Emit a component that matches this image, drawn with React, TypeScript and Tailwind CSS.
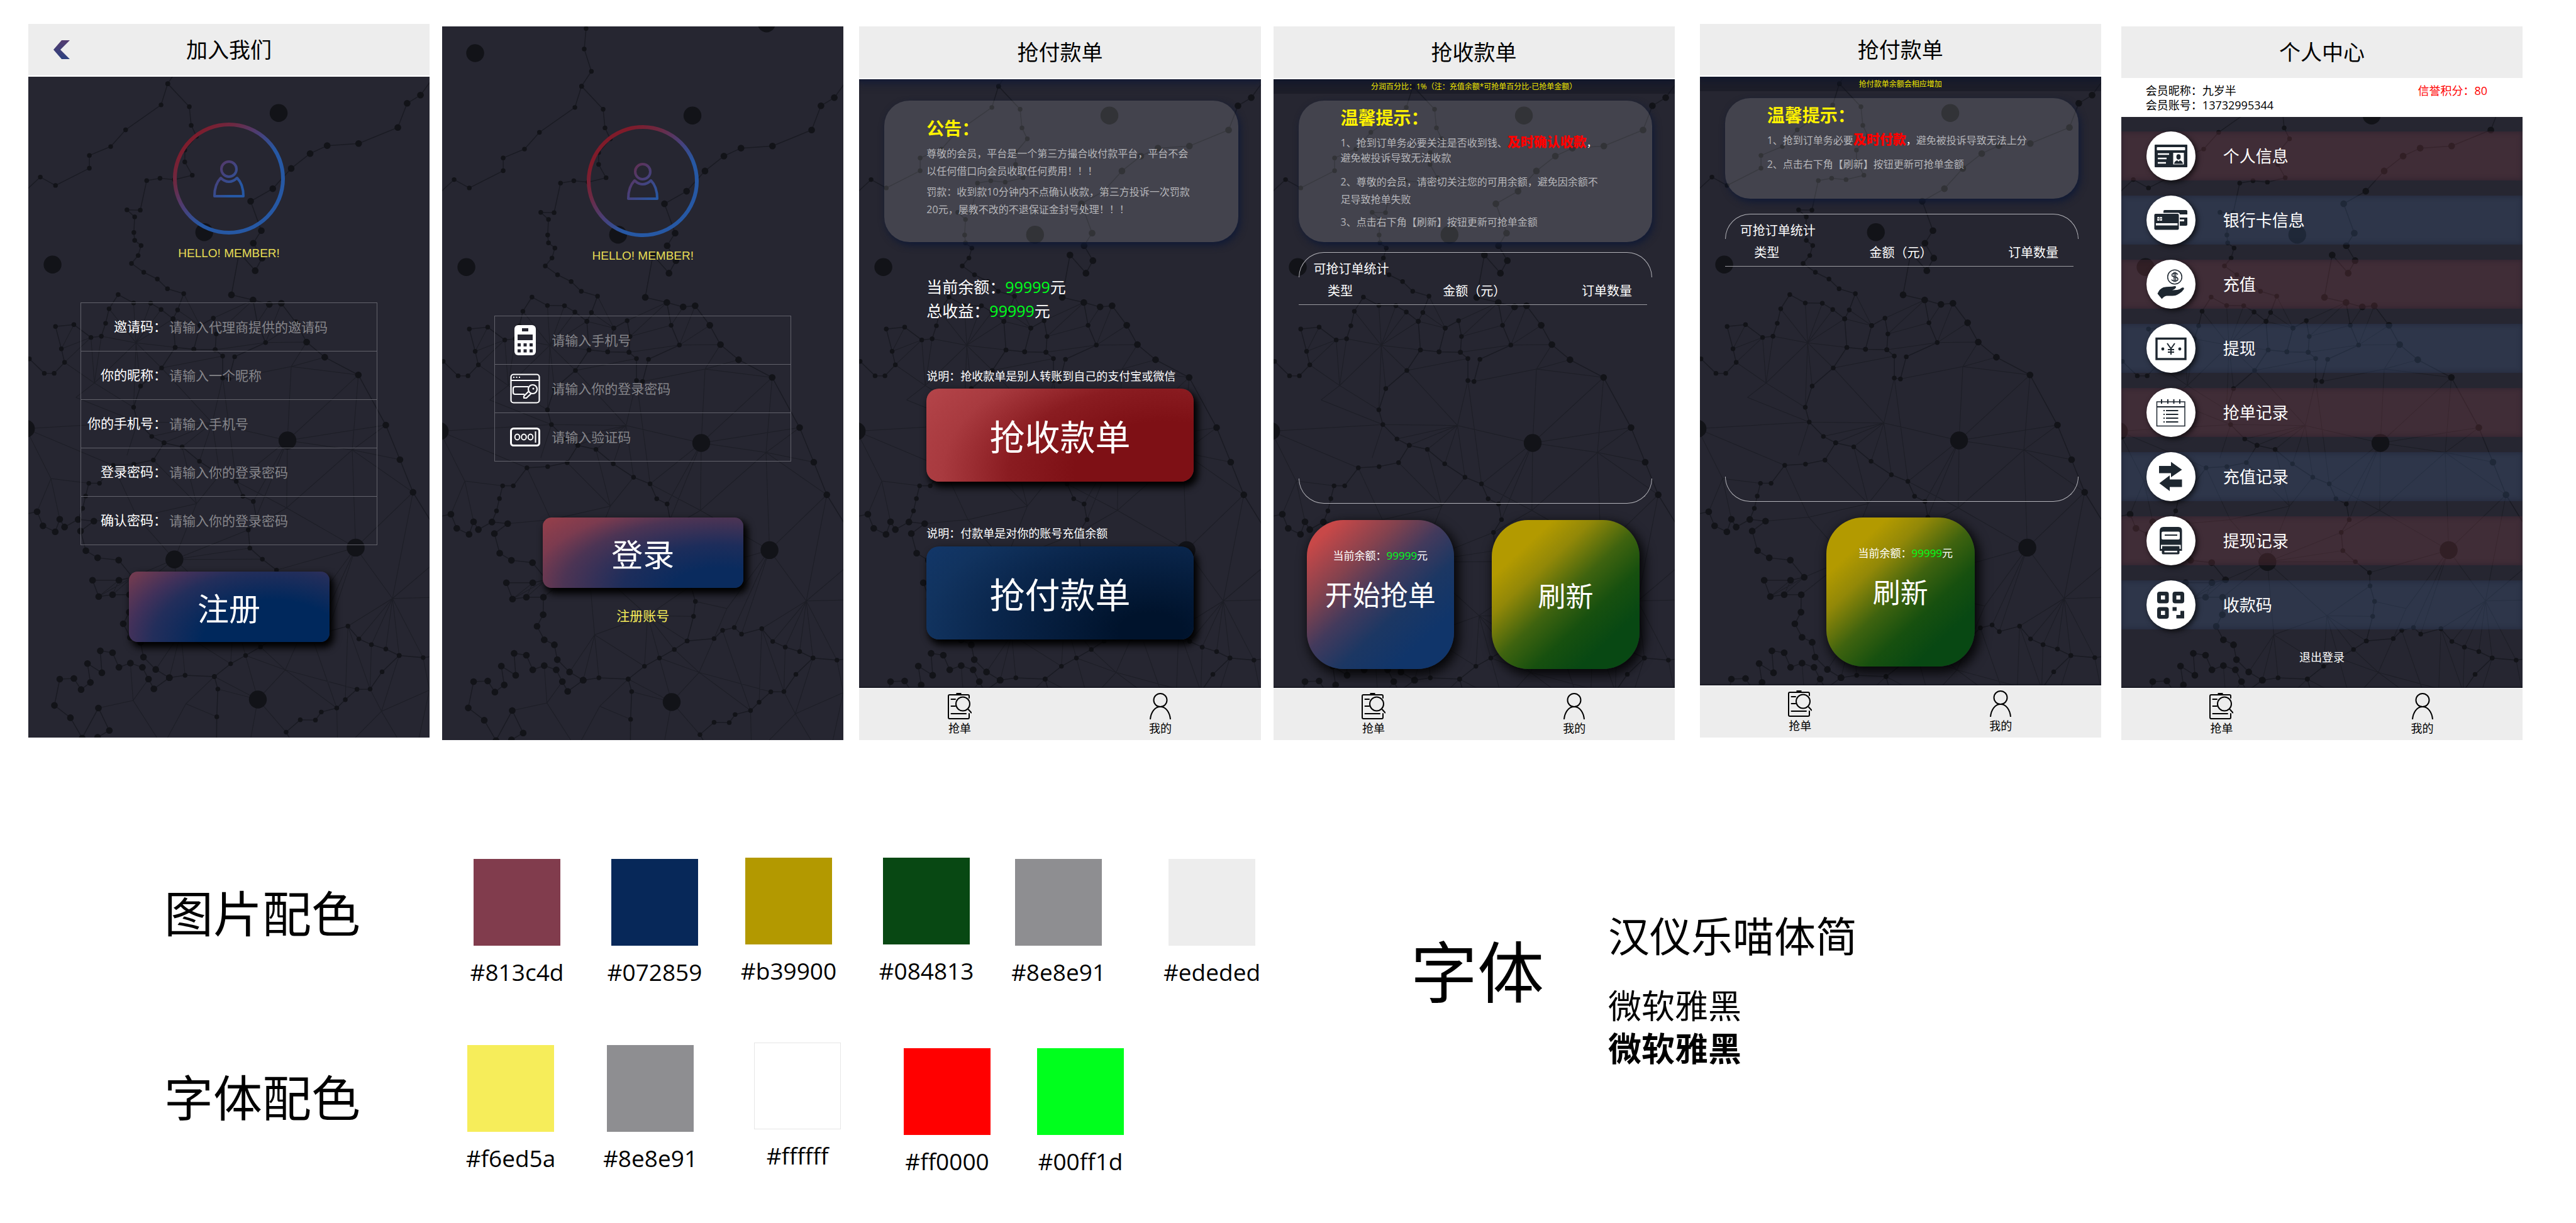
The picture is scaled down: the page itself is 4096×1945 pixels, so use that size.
import React, { useId } from "react";
import type { ReactNode } from "react";

type Point = [number, number];

/* ---------- constellation background ---------- */

// The net is stored as two stacked tiles; these map tile units to screen units.
const up = (x: number, y: number): Point => [(x - 24) * 0.4238, (y - 38) * 0.3701];
const low = (x: number, y: number): Point => [(x - 24) * 0.4238, 557 + y * 0.3761];

const parse = (src: string): Point[] =>
  src
    .trim()
    .split(/\s+/)
    .map((item) => {
      const inUpper = item[0] === "u";
      const [x, y] = (inUpper ? item.slice(1) : item).split(",").map(Number);
      return inUpper ? up(x, y) : low(x, y);
    });

const smallChains = [
  "u564,47 u557,135 u584,231 u547,295 u522,386 u389,493 u333,565 u253,603 u253,658 u126,732 u69,696 u14,754",
  "u547,295 u628,394 u635,474 u655,521 u611,580 u611,631 u639,688 u572,707 u518,701 u468,711 u444,838 u394,837 u423,867 u420,934 u423,968 u447,990 u436,1033 u411,1067 u457,1105 u508,1134 u546,1176 u607,1197 u584,1267 u567,1305 u575,1428 u524,1516 445,50 419,140 434,202 487,263 533,290 601,307 666,368 742,425 804,453 829,516 868,538 879,604 849,658 855,735 902,782 955,828 957,884 974,950 967,1013 943,1117 1044,1107 1076,1072 1120,1060 1147,1088 1223,1065 1264,1119 1311,1143 1365,1162 1415,1189 1505,1198 1545,1192",
  "u567,1305 u522,1265 u483,1238 u419,1237 u361,1201 u327,1262 u314,1324 u298,1380 u259,1385 u195,1330 u126,1338 u148,1434 u160,1492 u121,1539 u84,1539 u28,1477",
  "u668,1334 u718,1302 u729,1370 u725,1438 u645,1436 u668,1334",
  "u575,1428 u645,1436",
  "u725,1438 u753,1465 753,16 776,20 u798,1468 u914,1407 u883,1322 u867,1224",
  "943,1117 895,1153 839,1189 783,1224 722,1278 612,1273 553,1283",
  "211,614 228,567 239,515 251,461 291,461 342,385 420,380 493,363 533,290",
  "722,1278 735,1331 731,1448 730,1560",
  "1415,1189 1351,1258 1306,1331 1257,1332 1213,1376 1181,1411 1123,1428 1101,1462 1044,1461 991,1513 1015,1560",
].map(parse);

const mediumChains = [
  "u1560,242 u1495,344 u1445,379 u1410,483 u1263,552 u1145,561 u1081,595 u1010,659 u941,746 u858,800 u898,926 u868,980 u901,1044 u875,1098 u815,1020 u786,1202 u867,1224 u928,1243 u973,1238 u1028,1322 u1068,1405 u1136,1470 1262,3 1365,215 1418,361 1467,499 1560,670",
  "553,1283 502,1248 456,1196 445,1133 407,1112 380,1055 403,1006 404,932 340,932 288,940 265,871 364,871 415,858 363,786 284,776 240,746 220,663 270,621 211,614 160,646 142,613 125,666 79,641 57,581 10,592",
  "553,1283 495,1330 475,1289 452,1239 407,1221 364,1239 340,1177 294,1169 300,1262 246,1223 257,1303 222,1333 195,1286 142,1289 122,1400 182,1452 226,1538 287,1411 328,1506 284,1535",
].map(parse);

const bigDots = parse(
  "u148,153 u963,421 u684,933 u115,1072 u1241,25 996,280 15,230 1252,733 572,783 885,1375",
);

// Each fan is a hub followed by the points it reaches.
const fans = [
  "u428,1408 u298,1380 u327,1262 u419,1237 u483,1238 u522,1265 u567,1305 u575,1428 u524,1516 419,140 445,50 272,37",
  "272,37 u160,1492 u259,1385 u298,1380 202,98 419,140",
  "202,98 434,202",
  "u668,1334 u607,1197 u584,1267 u567,1305",
  "u867,1224 u718,1302 u729,1370",
  "u883,1322 u729,1370 u928,1243",
  "u914,1407 u725,1438 u973,1238 u1028,1322 u1068,1405",
  "u1010,1510 u1068,1405 u1136,1470 1262,3 776,20 996,280",
  "u148,1434 u195,1330 u259,1385",
  "u160,1492 u259,1385",
  "u524,1516 u753,1465",
  "714,206 434,202 533,290 601,307 666,368 742,425 753,16 996,280 u524,1516 487,263",
  "434,202 394,343",
  "15,230 434,202 342,385 109,441",
  "109,441 251,461 142,613 57,581",
  "655,547 493,363 601,307 742,425 432,604 572,783",
  "432,604 342,385 270,621 572,783",
  "996,280 1262,3 1365,215 1239,320 804,453 868,538 879,604 993,565",
  "993,565 804,453 1239,320 849,658 1252,733",
  "1239,320 1262,3 1365,215 1418,361 1467,499 1252,733",
  "804,453 753,16",
  "1252,733 1467,499 955,828 1092,980 1120,1060 1147,1088 1390,948",
  "1390,948 1467,499 1545,800 1545,943 1223,1065 1264,1119 1311,1143 1365,1162 1415,1189 1505,1198",
  "572,783 849,658 855,735 902,782 795,1010 415,858 404,932 596,1091",
  "795,1010 957,884 967,1013 943,1117 895,1153 839,1189 783,1224 596,1091",
  "596,1091 502,1248 553,1283 612,1273 783,1224",
  "1092,980 974,950 1044,1107",
  "988,1250 839,1189 895,1153 1044,1107 1257,1332 1181,1411 885,1375",
  "1223,1065 1213,1376 1306,1331",
  "1181,1411 1076,1072 1184,1560",
  "1306,1331 1311,1143 1349,1425",
  "885,1375 735,1331 722,1278 839,1189 991,1513 855,1560",
  "615,1393 722,1278 731,1448 535,1560",
  "417,1379 407,1221 475,1289 287,1411 520,1560",
  "1349,1425 1415,1189 1529,1335 1230,1560 1420,1560",
  "1529,1335 1505,1198 1485,1560",
  "364,871 288,940 340,932",
  "415,858 288,940 340,932",
].map(parse);

const polyline = (points: Point[]) =>
  "M" + points.map(([x, y]) => `${x.toFixed(1)} ${y.toFixed(1)}`).join("L");
const spokes = ([hub, ...ends]: Point[]) => ends.map((end) => polyline([hub, end])).join("");

const chainPath = [...smallChains, ...mediumChains].map(polyline).join("");
const fanPath = fans.map(spokes).join("");

function Constellation() {
  return (
    <svg
      aria-hidden="true"
      viewBox="0 0 638 1135"
      preserveAspectRatio="xMidYMin slice"
      className="absolute inset-0 -z-10 h-full w-full"
    >
      <path d={fanPath} fill="none" stroke="#1d1e26" strokeWidth="1" />
      <path d={chainPath} fill="none" stroke="#1a1b23" strokeWidth="1.5" />
      <g fill="#121318">
        {smallChains.flat().map(([x, y], i) => (
          <circle key={i} cx={x} cy={y} r="3.7" />
        ))}
        {mediumChains.flat().map(([x, y], i) => (
          <circle key={i} cx={x} cy={y} r="5.3" />
        ))}
        {bigDots.map(([x, y], i) => (
          <circle key={i} cx={x} cy={y} r="14.2" />
        ))}
      </g>
    </svg>
  );
}

/* ---------- shared screen parts ---------- */

function Screen({ className, children }: { className: string; children: ReactNode }) {
  return (
    <section
      className={`relative isolate flex aspect-[638/1135] min-w-0 flex-1 flex-col overflow-hidden bg-[#262631] text-white ${className}`}
    >
      <Constellation />
      {children}
    </section>
  );
}

function Header({ title, back, glow }: { title: string; back?: boolean; glow?: boolean }) {
  return (
    <header
      className={`grid h-[84px] shrink-0 grid-cols-[1fr_auto_1fr] items-center border-b-2 border-white bg-[#ededed] text-black ${
        glow ? "shadow-[0_2px_12px_4px_#131b36]" : ""
      }`}
    >
      <div className="pl-10">
        {back && (
          <button type="button" aria-label="返回" className="block">
            <svg viewBox="0 0 26 30" className="h-[30px] w-[26px]">
              <defs>
                <linearGradient id="back" x1="0" y1="0" x2="0" y2="1">
                  <stop offset="0" stopColor="#543c70" />
                  <stop offset="1" stopColor="#2c417f" />
                </linearGradient>
              </defs>
              <path d="M0 15L13 0H26L11 15L26 30H13Z" fill="url(#back)" />
            </svg>
          </button>
        )}
      </div>
      <h2 className="text-[34px] leading-[48px]">{title}</h2>
      <div />
    </header>
  );
}

function TabBar() {
  return (
    <nav className="mt-auto flex h-[83px] shrink-0 border-t border-white bg-[#ededed] text-[18px] leading-5 text-black shadow-[0_-1px_2px_#0d0e18]">
      <a href="#orders" className="flex flex-1 flex-col items-center pt-[7px]">
        <svg viewBox="0 0 38 42" className="h-[42px] w-[38px]" fill="none" stroke="#000" strokeWidth="2" strokeLinecap="round">
          <path d="M34 8V5Q34 3 32 3H3Q1 3 1 5V39Q1 41 3 41H32Q34 41 34 39V33" />
          <path d="M13.500 0H21.500V3H13.500Z" fill="#000" stroke="none" />
          <circle cx="24" cy="17.500" r="11" />
          <path d="M33 26.500L37.500 31.500M5.500 10H12M5.500 21H12M5.500 33H29" />
        </svg>
        <span className="mt-1">抢单</span>
      </a>
      <a href="#mine" className="flex flex-1 flex-col items-center pt-[7px]">
        <svg viewBox="0 0 34 42" className="h-[42px] w-[34px]" fill="none" stroke="#000" strokeWidth="2">
          <circle cx="17" cy="11.500" r="10.500" />
          <path d="M1 42C2 31 8 22 17 22S32 31 33 42" />
        </svg>
        <span className="mt-1">我的</span>
      </a>
    </nav>
  );
}

function Avatar({ shift, className }: { shift: number; className: string }) {
  const id = useId();
  return (
    <div className={`flex flex-col items-center ${className}`}>
      <svg viewBox="0 0 178 178" className="h-[178px] w-[178px]" fill="none">
        <defs>
          <linearGradient id={id} gradientUnits="userSpaceOnUse" x1="0" y1="0" x2="178" y2="178">
            <stop offset={0.14 + shift} stopColor="#801b2a" />
            <stop offset={0.28 + shift} stopColor="#6c2942" />
            <stop offset={0.44 + shift} stopColor="#48407a" />
            <stop offset={0.58 + shift} stopColor="#2658a4" />
          </linearGradient>
        </defs>
        <g stroke={`url(#${id})`}>
          <circle cx="89" cy="89" r="86" strokeWidth="6" />
          <circle cx="89" cy="74" r="12" strokeWidth="4" />
          <path
            d="M76 88C69 95 66 105 66 117H112C112 105 109 95 102 88Q96 94 89 94T76 88Z"
            strokeWidth="4"
            strokeLinejoin="round"
          />
        </g>
      </svg>
      <p className="mt-4 font-['Liberation_Sans',sans-serif] text-[19px] leading-7 text-[#e6dd55]">
        HELLO! MEMBER!
      </p>
    </div>
  );
}

const script = "font-['Noto_Sans_CJK_SC',sans-serif] font-normal";

/* ---------- register ---------- */

const registerFields = [
  ["邀请码：", "请输入代理商提供的邀请码", "text"],
  ["你的昵称：", "请输入一个昵称", "text"],
  ["你的手机号：", "请输入手机号", "tel"],
  ["登录密码：", "请输入你的登录密码", "password"],
  ["确认密码：", "请输入你的登录密码", "password"],
];

const inputStyle =
  "h-full w-full min-w-0 flex-1 bg-transparent text-[21px] text-white outline-none placeholder:text-[#85858a]";

function RegisterScreen() {
  return (
    <Screen className="">
      <Header title="加入我们" back />
      <Avatar shift={0} className="mt-[73px]" />
      <form className="mx-[83px] mt-16 border border-b-0 border-[#62626b]">
        {registerFields.map(([label, hint, type], i) => (
          <div key={label} className="flex h-[77px] items-center border-b border-[#62626b]">
            <label htmlFor={`reg-${i}`} className="w-[136px] shrink-0 text-right text-[21px]">
              {label}
            </label>
            <input id={`reg-${i}`} type={type} placeholder={hint} className={`ml-1 ${inputStyle}`} />
          </div>
        ))}
      </form>
      <button
        type="button"
        className={`mx-auto mt-[42px] h-[112px] w-1/2 rounded-[14px] bg-[radial-gradient(320px_190px_at_72%_100%,#00285c_35%,#232e5b_60%,#42315a_72%,#6e3a51_88%,#8f414e_112%)] text-[50px] shadow-[5px_7px_12px_2px_#000] ${script}`}
      >
        注册
      </button>
    </Screen>
  );
}

/* ---------- login ---------- */

function PhoneIcon() {
  return (
    <svg viewBox="0 0 34 48" className="h-12 w-[34px]">
      <rect width="34" height="48" rx="6" fill="#fff" />
      <path
        fill="#262631"
        d="M12 5H22V10H12ZM5 15H29V24H5ZM5 29H10V34H5ZM14.500 29H19.500V34H14.500ZM24 29H29V34H24ZM5 38.500H10V43.500H5ZM14.500 38.500H19.500V43.500H14.500ZM24 38.500H29V43.500H24Z"
      />
    </svg>
  );
}

function KeyIcon() {
  return (
    <svg viewBox="0 0 48 48" className="h-12 w-12" fill="none" stroke="#fff" strokeWidth="2.200">
      <rect x="1.500" y="1.500" width="45" height="45" rx="4" />
      <path d="M2 11H46" />
      <path d="M5 6H7M9.500 6H11.500M14 6H16" />
      <path d="M29 21H8Q5 21 5 24V30Q5 33 8 33H23" />
      <path d="M30 28L22 36V39H26L34 31.500" strokeLinejoin="round" />
      <circle cx="36" cy="25" r="7" />
      <circle cx="37" cy="24" r="1.500" fill="#fff" stroke="none" />
    </svg>
  );
}

function CodeIcon() {
  return (
    <svg viewBox="0 0 48 30" className="h-[30px] w-12" fill="none" stroke="#fff">
      <rect x="1.500" y="1.500" width="45" height="27" rx="4" strokeWidth="3" />
      <g strokeWidth="2">
        <ellipse cx="11.500" cy="15" rx="3.800" ry="4.500" />
        <ellipse cx="22" cy="15" rx="3.800" ry="4.500" />
        <ellipse cx="32.500" cy="15" rx="3.800" ry="4.500" />
        <path d="M40.500 6V24" />
      </g>
    </svg>
  );
}

const loginFields: [string, string, ReactNode][] = [
  ["请输入手机号", "tel", <PhoneIcon />],
  ["请输入你的登录密码", "password", <KeyIcon />],
  ["请输入验证码", "text", <CodeIcon />],
];

function LoginScreen() {
  return (
    <Screen className="mt-1 ml-5">
      <Avatar shift={0.06} className="mt-[157px]" />
      <form className="mx-[83px] mt-[81px] border border-b-0 border-[#62626b]">
        {loginFields.map(([hint, type, icon], i) => (
          <div key={hint} className="flex h-[77px] items-center border-b border-[#62626b]">
            <label htmlFor={`login-${i}`} aria-label={hint} className="ml-6 flex w-12 shrink-0 justify-center">
              {icon}
            </label>
            <input id={`login-${i}`} type={type} placeholder={hint} className={`ml-[18px] ${inputStyle}`} />
          </div>
        ))}
      </form>
      <button
        type="button"
        className={`mx-auto mt-[89px] h-[112px] w-1/2 rounded-[14px] bg-[radial-gradient(400px_180px_at_88%_100%,#0a2b5e_18%,#1d2d5b_38%,#4c3454_62%,#7c3b4f_76%,#9e4048_98%)] text-[50px] shadow-[5px_7px_12px_2px_#000] ${script}`}
      >
        登录
      </button>
      <a href="#register" className="mx-auto mt-7 text-[21px] leading-8 text-[#f6ed5a]">
        注册账号
      </a>
    </Screen>
  );
}

/* ---------- grab screens ---------- */

const cardStyle =
  "mr-9 ml-10 rounded-[40px] bg-white/[0.135] pr-6 pl-[67px] text-[16px] text-[#b6b6ba] shadow-[3px_5px_12px_#101a36]";
const cardTitle = "text-[28px] leading-9 font-bold text-[#fff200]";

function Balance({ className }: { className: string }) {
  return (
    <span className={className}>
      当前余额：<span className="text-[#00ff1d]">99999</span>元
    </span>
  );
}

function HomeScreen() {
  return (
    <Screen className="mt-1 ml-[25px]">
      <Header title="抢付款单" glow />
      <div className={`mt-[34px] pt-[26px] pb-[38px] ${cardStyle}`}>
        <h3 className={cardTitle}>公告：</h3>
        <p className="mt-2 leading-7">
          尊敬的会员，平台是一个第三方撮合收付款平台，平台不会
          <br />
          以任何借口向会员收取任何费用！！！
        </p>
        <p className="mt-[5px] leading-7">
          罚款：收到款10分钟内不点确认收款，第三方投诉一次罚款
          <br />
          20元，屡教不改的不退保证金封号处理！！！
        </p>
      </div>
      <div className="mx-[107px] flex flex-col text-[18px] leading-7">
        <p className="mt-[52px] text-[25px] leading-[38px]">
          <Balance className="" />
          <br />
          总收益：<span className="text-[#00ff1d]">99999</span>元
        </p>
        <p className="mt-[71px] whitespace-nowrap">说明：抢收款单是别人转账到自己的支付宝或微信</p>
        <button
          type="button"
          className={`mt-[6px] h-[148px] rounded-[20px] bg-[radial-gradient(420px_230px_at_90%_90%,#7e1015_35%,#8a1c21_60%,#a83a3f_85%,#b5454a_108%)] text-[56px] shadow-[5px_7px_12px_2px_#000] ${script}`}
        >
          抢收款单
        </button>
        <p className="mt-[68px]">说明：付款单是对你的账号充值余额</p>
        <button
          type="button"
          className={`mt-[7px] h-[148px] rounded-[20px] bg-[radial-gradient(420px_230px_at_84%_90%,#00132c_12%,#0a264c_60%,#11335f_85%,#12376a_105%)] text-[56px] shadow-[5px_7px_12px_2px_#000] ${script}`}
        >
          抢付款单
        </button>
      </div>
      <TabBar />
    </Screen>
  );
}

function Strip({ children }: { children: ReactNode }) {
  return (
    <p className="h-[23px] shrink-0 bg-[#10121e]/40 text-center text-[12px] leading-6 text-[#f2e900]">{children}</p>
  );
}

function OrderStats({ className }: { className: string }) {
  return (
    <section
      className={`relative mr-9 ml-10 pt-[13px] before:absolute before:inset-x-0 before:top-0 before:h-10 before:rounded-t-[40px] before:border before:border-b-0 before:border-[#b4b4ba] after:absolute after:inset-x-0 after:bottom-0 after:h-10 after:rounded-b-[40px] after:border after:border-t-0 after:border-[#b4b4ba] ${className}`}
    >
      <h3 className="pl-6 text-[20px] leading-7">可抢订单统计</h3>
      <div className="mr-2">
        <table className="w-full table-fixed text-[20px]">
          <thead>
            <tr className="h-[42px] border-b border-[#9a9aa0]">
              <th className="w-[24%] font-normal">类型</th>
              <th className="w-[53%] font-normal">金额（元）</th>
              <th className="w-[23%] font-normal">订单数量</th>
            </tr>
          </thead>
        </table>
      </div>
    </section>
  );
}

const tileStyle =
  "flex h-[237px] flex-col items-center rounded-[58px] text-[44px] leading-[64px] shadow-[5px_7px_18px_3px_rgba(0,0,0,0.85)]";
const greenTile = "bg-[linear-gradient(137deg,#b39a00_20%,#928808_33%,#3f630f_50%,#17500f_65%,#084813_80%)]";

function CollectScreen() {
  return (
    <Screen className="mt-1 ml-5">
      <Header title="抢收款单" glow />
      <Strip>分润百分比：1%（注：充值余额*可抢单百分比-已抢单金额）</Strip>
      <div className={`mt-[11px] pt-[9px] pb-[18px] ${cardStyle}`}>
        <h3 className={cardTitle}>温馨提示：</h3>
        <p className="mt-2 leading-6">
          1、抢到订单务必要关注是否收到钱、
          <strong className="text-[21px] font-black text-[#ff0000]">及时确认收款</strong>
          <span className="text-white">，</span>
          <br />
          避免被投诉导致无法收款
        </p>
        <p className="mt-3 leading-7">
          2、尊敬的会员，请密切关注您的可用余额，避免因余额不
          <br />
          足导致抢单失败
        </p>
        <p className="mt-2 leading-7">3、点击右下角【刷新】按钮更新可抢单金额</p>
      </div>
      <OrderStats className="mt-4 h-[400px]" />
      <div className="mr-[52px] ml-[53px] mt-[26px] flex gap-[60px]">
        <button
          type="button"
          className={`${tileStyle} ${script} w-[44%] bg-[linear-gradient(137deg,#c84848_10%,#84424e_30%,#433a5c_46%,#1c3763_62%,#10356a_80%)] pt-[45px]`}
        >
          <Balance className="font-['Open_Sans','Noto_Sans_CJK_SC',sans-serif] text-[17px] leading-6" />
          <span className="mt-4">开始抢单</span>
        </button>
        <button type="button" className={`${tileStyle} ${script} w-[44%] justify-center ${greenTile}`}>
          刷新
        </button>
      </div>
      <TabBar />
    </Screen>
  );
}

function PayScreen() {
  return (
    <Screen className="ml-10">
      <Header title="抢付款单" glow />
      <Strip>抢付款单余额会相应增加</Strip>
      <div className={`mt-[11px] pt-[9px] pb-[41px] ${cardStyle}`}>
        <h3 className={cardTitle}>温馨提示：</h3>
        <p className="mt-2 leading-6 whitespace-nowrap">
          1、抢到订单务必要
          <strong className="text-[21px] font-black text-[#ff0000]">及时付款</strong>
          <span className="text-white">，</span>避免被投诉导致无法上分
        </p>
        <p className="mt-3 leading-7">2、点击右下角【刷新】按钮更新可抢单金额</p>
      </div>
      <OrderStats className="mt-6 h-[458px]" />
      <button type="button" className={`${tileStyle} ${script} mx-auto mt-[25px] w-[37%] pt-[45px] ${greenTile}`}>
        <Balance className="pl-4 font-['Open_Sans','Noto_Sans_CJK_SC',sans-serif] text-[17px] leading-6" />
        <span className="mt-4">刷新</span>
      </button>
      <TabBar />
    </Screen>
  );
}

/* ---------- profile ---------- */

const ink = "#1e2730";

const menu: [string, ReactNode][] = [
  [
    "个人信息",
    <>
      <rect x="13" y="21" width="52" height="36" rx="1" fill={ink} />
      <rect x="16.500" y="25" width="45" height="5" rx="1" fill="#fff" />
      <path d="M18 36H36M18 43H32M18 50H31" stroke="#fff" strokeWidth="2.400" />
      <rect x="42.500" y="34" width="17" height="18.500" fill="#fff" />
      <ellipse cx="51" cy="40.500" rx="3.400" ry="4.200" fill={ink} />
      <path d="M44 51.500Q44.500 47 49 46L51 48L53 46Q57.500 47 58 51.500Z" fill={ink} />
    </>,
  ],
  [
    "银行卡信息",
    <>
      <rect x="27" y="23" width="38" height="25" rx="2" fill={ink} />
      <path d="M27 30H65V35H27Z" fill="#fff" />
      <rect x="53" y="38" width="7" height="3" fill="#fff" />
      <rect x="11" y="27.500" width="42" height="28" rx="2.500" fill="#fff" />
      <rect x="12.500" y="29" width="39" height="25.500" rx="2" fill={ink} />
      <path d="M15 44H49.500V47.500H15Z" fill="#fff" />
      <rect x="17" y="34" width="8" height="6" rx="1.500" fill="#fff" />
      <path d="M17 37H20M22 37H25M21 34V40" stroke={ink} />
    </>,
  ],
  [
    "充值",
    <>
      <circle cx="45" cy="27.500" r="11.300" fill="none" stroke={ink} strokeWidth="1.500" />
      <path
        d="M50 23.500Q48.500 21.500 45 21.500Q40.500 21.500 40.500 24.500Q40.500 27 45 27.500Q50 28 50 31Q50 34 45 34Q41 34 40 31.500M44 19.500V35.500M46.500 19.500V35.500"
        fill="none"
        stroke={ink}
        strokeWidth="1.500"
      />
      <path
        d="M17.500 54Q21 46 27 44Q32 43 36 43Q41 43 45 42Q48 42 46.500 45Q44.500 47.500 41 48.500L49 48Q53 47.500 56.500 44.500Q60.500 43.500 59.500 47Q57 51 52 54Q47 57.500 41 57.500H32Q28 58 24.500 62.500Z"
        fill={ink}
      />
    </>,
  ],
  [
    "提现",
    <>
      <rect x="16" y="23.500" width="46" height="32.500" fill="none" stroke={ink} strokeWidth="3.400" />
      <path d="M33 31L39 39.500L45 31M39 39.500V49M34 41H44M34 45H44" fill="none" stroke={ink} strokeWidth="2" />
      <circle cx="26" cy="40" r="2.400" fill={ink} />
      <circle cx="53" cy="40" r="2.400" fill={ink} />
    </>,
  ],
  [
    "抢单记录",
    <>
      <path d="M16.500 22H61V60.500H16.500Z" fill="none" stroke={ink} strokeWidth="1.500" />
      <path d="M16.500 30H61" stroke={ink} strokeWidth="2" />
      <path d="M24 18V25M34 18V25M43.500 18V25M53 18V25" stroke={ink} strokeWidth="2" />
      <path d="M31 36H50.500M31 42H50.500M31 48H50.500M31 54H50.500" stroke={ink} strokeWidth="2" />
      <path d="M27 36H29M27 42H29M27 48H29M27 54H29" stroke={ink} strokeWidth="2" />
    </>,
  ],
  [
    "充值记录",
    <>
      <path d="M20 22H39V15.500L56.500 28L39 40V33.500H20Z" fill={ink} />
      <path d="M56.500 43.500H37V37L20.500 49.500L37 62V55.500H56.500Z" fill={ink} />
    </>,
  ],
  [
    "提现记录",
    <>
      <path d="M21 55V23Q21 17 27 17H50.500Q56.500 17 56.500 23V55Z" fill={ink} />
      <rect x="24" y="24.500" width="29" height="12.500" rx="2" fill="#fff" />
      <path d="M29 30H49" stroke={ink} strokeWidth="2" />
      <path d="M24 52V46.500H53.500V52" fill="none" stroke="#fff" strokeWidth="2" />
      <rect x="24.500" y="50" width="28" height="10.500" rx="2" fill={ink} />
      <rect x="28.500" y="55" width="20.500" height="2.500" fill="#fff" />
    </>,
  ],
  [
    "收款码",
    <>
      <g fill="none" stroke={ink} strokeWidth="6">
        <rect x="20" y="21" width="12.500" height="12.500" rx="1" />
        <rect x="44.500" y="21" width="12.500" height="12.500" rx="1" />
        <rect x="20" y="45.500" width="12.500" height="12.500" rx="1" />
      </g>
      <path d="M41.500 42.500H48V48.500H41.500ZM54 48.500H60V60.500H47.500V55H54Z" fill={ink} />
    </>,
  ],
];

function ProfileScreen() {
  return (
    <Screen className="mt-1 ml-8">
      <Header title="个人中心" />
      <div className="flex h-[60px] shrink-0 justify-between bg-white pt-[7px] pr-14 pl-[39px] text-[18px] leading-[23px] text-black">
        <p>
          会员昵称：九岁半
          <br />
          会员账号：13732995344
        </p>
        <p className="text-[#ff0000]">信誉积分：80</p>
      </div>
      <ul className="mt-[23px] flex flex-col gap-6">
        {menu.map(([label, icon], i) => (
          <li key={label}>
            <a
              href="#menu"
              className={`flex h-[78px] items-center gap-[44px] pl-10 text-[26px] shadow-[inset_0_0_8px_rgba(20,20,35,0.45)] ${
                i % 2 === 0 ? "bg-[#8f454d]/25" : "bg-[#466996]/25"
              }`}
            >
              <span className="h-[78px] w-[78px] rounded-full bg-white shadow-[3px_3px_8px_rgba(0,0,0,0.7)]">
                <svg viewBox="0 0 78 78" className="h-full w-full">
                  {icon}
                </svg>
              </span>
              {label}
            </a>
          </li>
        ))}
      </ul>
      <button type="button" className="mx-auto mt-[30px] text-[18px] leading-7">
        退出登录
      </button>
      <TabBar />
    </Screen>
  );
}

/* ---------- style notes ---------- */

const imageColours: [string, string, string][] = [
  ["#813c4d", "bg-[#813c4d]", "mt-[2px]"],
  ["#072859", "bg-[#072859]", "mt-[2px] ml-[59px]"],
  ["#b39900", "bg-[#b39900]", "ml-[53px]"],
  ["#084813", "bg-[#084813]", "ml-[59px]"],
  ["#8e8e91", "bg-[#8e8e91]", "mt-[2px] ml-[50px]"],
  ["#ededed", "bg-[#ededed]", "mt-[2px] ml-[84px]"],
];

const textColours: [string, string, string][] = [
  ["#f6ed5a", "bg-[#f6ed5a]", "mt-1"],
  ["#8e8e91", "bg-[#8e8e91]", "mt-1 ml-[62px]"],
  ["#ffffff", "border border-[#e6e6e6] bg-white", "ml-[74px]"],
  ["#ff0000", "bg-[#ff0000]", "mt-[9px] ml-[78px]"],
  ["#00ff1d", "bg-[#00ff1d]", "mt-[9px] ml-[52px]"],
];

function Swatches({ items }: { items: [string, string, string][] }) {
  return (
    <ul className="flex items-start">
      {items.map(([name, fill, place]) => (
        <li key={name} className={`flex w-40 flex-col items-center ${place}`}>
          <span className={`h-[138px] w-[138px] ${fill}`} />
          <span className="mt-[18px] text-[37px] leading-[48px]">{name}</span>
        </li>
      ))}
    </ul>
  );
}

export default function App() {
  return (
    <main className="bg-white pb-[74px] font-['Open_Sans','Noto_Sans_CJK_SC',sans-serif] text-black">
      <div className="flex items-start pt-[38px] pr-[85px] pl-[45px]">
        <RegisterScreen />
        <LoginScreen />
        <HomeScreen />
        <CollectScreen />
        <PayScreen />
        <ProfileScreen />
      </div>
      <div className="mt-[187px] flex items-start pl-[261px]">
        <div>
          <div className="flex items-start gap-[169px]">
            <h2 className="mt-[41px] text-[78px] leading-[96px] whitespace-nowrap">图片配色</h2>
            <Swatches items={imageColours} />
          </div>
          <div className="mt-[88px] flex items-start gap-[159px]">
            <h2 className="mt-10 text-[78px] leading-[96px] whitespace-nowrap">字体配色</h2>
            <Swatches items={textColours} />
          </div>
        </div>
        <h2 className="mt-[116px] ml-[236px] text-[106px] leading-[130px] whitespace-nowrap">字体</h2>
        <div className="mt-[84px] ml-[102px] whitespace-nowrap">
          <p className="text-[66px] leading-20">汉仪乐喵体简</p>
          <p className="mt-[38px] text-[53px] leading-[68px]">微软雅黑</p>
          <p className="text-[53px] leading-[68px] font-bold">微软雅黑</p>
        </div>
      </div>
    </main>
  );
}
